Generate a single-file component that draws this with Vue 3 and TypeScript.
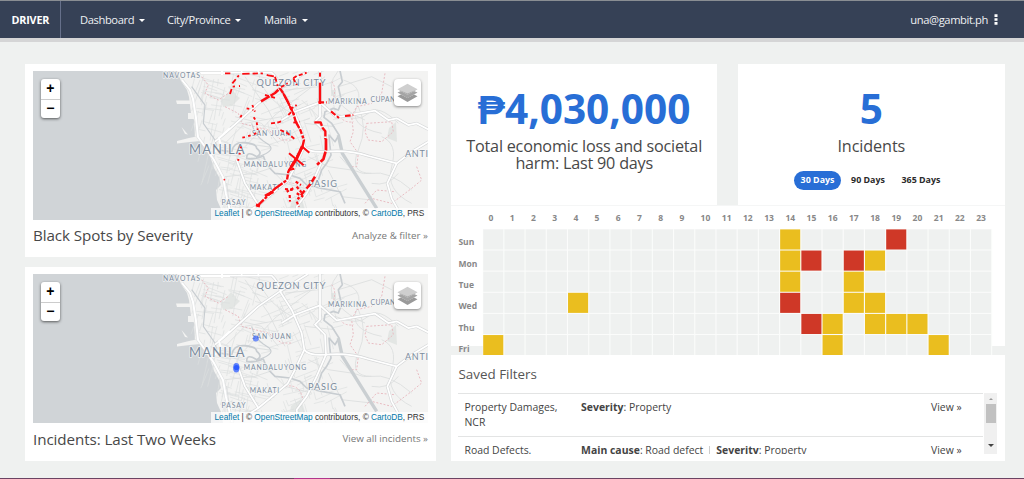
<script setup lang="ts">
interface Place { name: string; x: number; y: number; size: number; width?: number }
interface Filter { name: string; rules: { key: string; value: string }[] }

const menus = [
  { label: 'Dashboard', cls: 'm-dash' },
  { label: 'City/Province', cls: 'm-city' },
  { label: 'Manila', cls: 'm-manila' },
]

const maps = [
  { title: 'Black Spots by Severity', link: 'Analyze & filter »', kind: 'spots' },
  { title: 'Incidents: Last Two Weeks', link: 'View all incidents »', kind: 'points' },
]

const places: Place[] = [
  { name: 'NAVOTAS', x: 163, y: 77.6, size: 6.8, width: 37 },
  { name: 'QUEZON CITY', x: 256.5, y: 85.6, size: 9.2, width: 69 },
  { name: 'MARIKINA', x: 328, y: 103.8, size: 6.8, width: 38.5 },
  { name: 'CUPANG', x: 370.5, y: 102.4, size: 6.8, width: 30 },
  { name: 'SAN JUAN', x: 252, y: 136, size: 6.8, width: 39 },
  { name: 'MANILA', x: 189, y: 154.2, size: 13, width: 55.5 },
  { name: 'MANDALUYONG', x: 243.7, y: 167, size: 6.8, width: 62.5 },
  { name: 'ANTI', x: 405, y: 157.2, size: 9, width: 23 },
  { name: 'PASIG', x: 308, y: 187, size: 9.2, width: 29 },
  { name: 'MAKATI', x: 249.7, y: 190, size: 6.8, width: 29.5 },
  { name: 'PASAY', x: 221.6, y: 205, size: 6.8, width: 24 },
]

/* Street mesh: dense in the old city, sparser toward the hills. */
function mesh(): string {
  let seed = 11
  const rnd = () => (seed = (seed * 16807) % 2147483647) / 2147483647
  let d = ''
  for (let i = 0; i < 260; i++) {
    const y = 71 + rnd() * 149
    const coast = 196 + Math.max(0, y - 135) * 0.42
    const x = coast + Math.pow(rnd(), 1.5) * (335 - coast)
    const tilt = (x < 260 ? 0.25 : -0.35) + (rnd() - 0.5) * 0.3
    const a = rnd() > 0.5 ? tilt : tilt + Math.PI / 2
    const l = 6 + rnd() * 20
    d += `M${x.toFixed(1)} ${y.toFixed(1)}l${(Math.cos(a) * l).toFixed(1)} ${(Math.sin(a) * l).toFixed(1)}`
  }
  return d
}
const streets = mesh()

const lanes = [
  'M340 42Q300 90 335 130T420 190', 'M355 70Q420 90 395 150T470 230', 'M300 60L150 175L60 270', 'M60 60L130 160L180 260',
  'M100 45Q110 120 200 170', 'M170 180L60 200L0 260', 'M330 170Q400 200 430 170T520 200', 'M345 300Q390 360 440 350T560 400',
  'M400 150Q430 210 400 280T440 350', 'M310 340L350 420L440 430', 'M240 200L330 210', 'M230 130L290 190', 'M180 100L280 90',
  'M470 240Q520 260 500 330T560 440', 'M340 90L440 60L500 90', 'M440 380Q490 390 520 350', 'M250 300L310 330L380 340',
  'M120 320L180 380L260 400', 'M0 360L90 350L150 330', 'M30 180L110 200L160 260',
]

const majors = [
  'M0 230L100 140L165 95L250 42', 'M-90 48H140Q160 65 168 100L200 150L230 220L238 270L210 330L188 372L100 445L60 470',
  'M285 42V180L270 195L300 225L303 285L275 350L245 410L215 450L218 480', 'M170 190L210 165L285 137L335 182L450 162L490 190L515 185L550 205L575 200L610 218',
  'M238 270Q250 288 300 285Q370 278 430 298L515 320L560 285L610 255', 'M515 320L487 380L500 425L525 470', 'M35 310L60 380L100 445',
  'M0 230L-30 255', 'M100 42V50M50 42V50', 'M0 380L15 470',
]

const bounds = [
  'M480 50L470 110L440 140L395 150L380 180L385 225L375 255L400 290L395 330L375 330', 'M425 200L500 195L505 225L470 255L430 250L420 225L425 200',
  'M575 330L590 370L560 395L500 440L440 425', 'M320 75Q335 90 325 125', 'M0 150L40 170L50 200L130 220L170 250L200 250', 'M180 380Q230 370 235 430',
  'M420 440L455 400L510 405', 'M345 180Q360 200 385 195', 'M-70 60L-50 85L-60 110L-20 130L10 110',
]

const redLines = [
  { d: 'M15 102L22 80L45 78M22 70L45 42L110 40L130 46L150 50M0 40H20M150 50L158 78', w: 5.5, a: '16 8 7 12 22 9' },
  { d: 'M108 124L150 99L165 85', w: 7.5, a: '30 3' },
  { d: 'M120 105L155 115M168 82L188 70M205 55L215 48L245 38M205 55L215 75', w: 5.5, a: '12 7' },
  { d: 'M165 85L173 97M176 102L190 128L205 160L212 185L226 210L237 240L232 262L215 292L190 335L186 360L150 386L97 438', w: 7, a: '38 4 15 5 9 4' },
  { d: 'M172 95L190 130L208 165', w: 5, a: '' },
  { d: 'M232 258L216 294L198 322', w: 9, a: '' },
  { d: 'M192 280L236 316M232 260L253 278M190 330L208 326', w: 6, a: '' },
  { d: 'M285 38V50', w: 6, a: '' }, { d: 'M285 68V132', w: 7, a: '' },
  { d: 'M280 127H305M318 154L342 174M360 168L385 165', w: 6.5, a: '17 6' },
  { d: 'M268 187H287L293 204L301 214V238', w: 7, a: '30 5' },
  { d: 'M303 236V270L295 298L276 314', w: 8, a: '35 4' },
  { d: 'M270 350L255 374L240 390L218 418', w: 7.5, a: '18 8' },
  { d: 'M82 135L90 155M65 145L85 150M50 165L42 180M86 172L95 185L98 210M52 233L65 230L88 222L104 215', w: 5.5, a: '8 10' },
  { d: 'M138 190L160 187L174 182M166 210L185 218L210 238M195 148L215 135M205 188L225 185M190 165L200 155', w: 5.5, a: '12 7' },
  { d: 'M48 260L42 290L38 308', w: 6, a: '5 14' },
  { d: 'M180 387L203 390M194 405L195 425M212 365L228 375M215 380L230 398M215 400L235 410M215 425L222 440M205 385L185 395', w: 6.5, a: '9 6' },
  { d: 'M120 408L145 395M93 435L105 438', w: 9, a: '' },
]

const heat: Record<string, string> = {
  '0-14': 'y', '0-19': 'r', '1-14': 'y', '1-15': 'r', '1-17': 'r', '1-18': 'y', '2-14': 'y', '2-17': 'y',
  '3-4': 'y', '3-14': 'r', '3-17': 'y', '3-18': 'y', '4-15': 'r', '4-16': 'y', '4-18': 'y', '4-19': 'y', '4-20': 'y',
  '5-0': 'y', '5-16': 'y', '5-21': 'y',
}
const days = ['Sun', 'Mon', 'Tue', 'Wed', 'Thu', 'Fri']
const hours = Array.from({ length: 24 }, (_, i) => i)
const cells = days.flatMap((_, r) => hours.map((c) => ({ r, c, cls: heat[`${r}-${c}`] ?? 'n' })))

const filters: Filter[] = [
  { name: 'Property Damages, NCR', rules: [{ key: 'Severity', value: 'Property' }] },
  { name: 'Road Defects.', rules: [{ key: 'Main cause', value: 'Road defect' }, { key: 'Severity', value: 'Property' }] },
]
</script>

<template>
  <div class="page">
    <nav class="bar">
      <div class="brand">DRIVER</div>
      <div v-for="m in menus" :key="m.label" class="menu" :class="m.cls">{{ m.label }}<i class="caret" /></div>
      <div class="user">una@gambit.ph
        <svg class="dots" width="4" height="11" viewBox="0 0 4 11"><path d="M.5 .3h3v2.6h-3zM.5 4.2h3v2.6h-3zM.5 8.1h3v2.6h-3z" fill="#fff" /></svg>
      </div>
    </nav>

    <main class="board">
      <div class="left">
        <section v-for="m in maps" :key="m.kind" class="panel mapcard">
          <div class="map">
            <svg class="canvas" viewBox="33 71 395 149" preserveAspectRatio="none">
              <rect x="33" y="71" width="395" height="149" fill="#d0d4d7" />
              <g fill="#f3f3f2">
                <path d="M177 71L181 81L187 90L189 97L191 113L194 120L195 136L204 146L210 156L214 168L219 177L221 185L216 190L217 200L221 209L223 220H428V71Z" />
                <path d="M176 100.5H191V104H177ZM177 141L189 138L199 136L201 141L190 142L177 143.5ZM181.5 127L188 134.5L185 134ZM188 113h6v6h-6z" />
              </g>
              <g fill="#e3e6e4"><path d="M221 101L231 92L240 98L232 106L223 107Z" /><path d="M389 128L396 122L397 142L387 138Z" /><path d="M291 203L301 196L305 209H290Z" /><path d="M225 96l6-7 5 5-5 9z" /><path d="M331 90h5v6h-5z" /></g>
              <path :d="streets" class="street" />
              <g transform="translate(225 56.7) scale(.33333)" fill="none">
                <path v-for="d in lanes" :key="d" :d="d" class="lane" />
                <path v-for="d in bounds" :key="d" :d="d" class="bound" />
                <path class="river" d="M345 42L352 75L340 90L350 135L340 160L325 155L300 165L297 182L320 200L342 235L330 255L312 235L315 270L318 295L305 320L290 340L280 370" />
                <path class="river" d="M-20 280L20 285Q25 255 60 258T95 275Q115 290 95 300Q65 280 65 305Q90 310 115 298L125 325L150 350L195 355L225 365L245 385L290 395L345 405L360 440" />
                <path class="river thin" d="M80 200Q90 240 125 260T100 300M-100 90L-60 145L-65 200L-30 250L-25 270" />
                <path class="floodway" d="M340 235L352 290L455 455" />
                <path v-for="d in majors" :key="d" :d="d" class="case" />
                <path v-for="d in majors" :key="d" :d="d" class="major" />
              </g>
              <g fill="none">
                <path class="coast-case" d="M182 80L190 90L193 99L196 118L198 137L206 148L214 160L223 177L226 194L232 219" />
                <path class="coast" d="M182 80L190 90L193 99L196 118L198 137L206 148L214 160L223 177L226 194L232 219" />
                <path class="coast" d="M230 128L219 138L221 146L210 156M222 71V75M201 73H230" />
              </g>
              <text v-for="p in places" :key="p.name" class="place" :x="p.x" :y="p.y" :font-size="p.size" :textLength="p.width">{{ p.name }}</text>
              <g v-if="m.kind === 'spots'" transform="translate(225 60) scale(.33333)" fill="none" stroke="#fb0d12" stroke-linejoin="round">
                <path v-for="l in redLines" :key="l.d" :d="l.d" :stroke-width="l.w" :stroke-dasharray="l.a || undefined" />
                <circle cx="-2" cy="359" r="2" fill="#fb0d12" />
              </g>
              <g v-else fill="#2e5cff">
                <circle cx="255.8" cy="135.6" r="3" opacity=".65" />
                <ellipse cx="236.3" cy="164.8" rx="3.2" ry="4.7" opacity=".75" />
                <circle cx="236.5" cy="164.5" r="2.6" />
              </g>
            </svg>
            <div class="zoom"><button>+</button><button>−</button></div>
            <div class="layers">
              <svg width="21" height="20" viewBox="0 0 21 20">
                <path d="M.5 13.2L4 11.5L10.5 15L17 11.5L20.5 13.2L10.5 19Z" fill="#9a9a9a" />
                <path d="M.5 9.5L4 8L10.5 11.6L17 8L20.5 9.5L10.5 15.2Z" fill="#a5a5a5" />
                <path d="M.5 6.2L10.5 .8L20.5 6.2L10.5 11.8Z" fill="#cfcfcf" /><path d="M.5 6.2L10.5 11.8L20.5 6.2L10.5 10.6Z" fill="#aaa" />
              </svg>
            </div>
            <div class="credit"><b>Leaflet</b> | © <b>OpenStreetMap</b> contributors, © <b>CartoDB</b>, PRS</div>
          </div>
          <footer class="mapfoot"><h2>{{ m.title }}</h2><a>{{ m.link }}</a></footer>
        </section>
      </div>

      <div class="right">
        <div class="stats">
          <section class="panel stat">
            <div class="num">₱4,030,000</div>
            <p class="loss">Total economic loss and societal<br />harm: Last 90 days</p>
          </section>
          <section class="panel stat">
            <div class="num">5</div>
            <p>Incidents</p>
            <div class="range"><span class="on">30 Days</span><span>90 Days</span><span>365 Days</span></div>
          </section>
        </div>
        <section class="panel heat">
          <svg width="553" height="151" viewBox="451 205 553 151">
            <text v-for="h in hours" :key="h" class="tick" :x="488.6 + h * 21.2" y="221">{{ h }}</text>
            <text v-for="(d, i) in days" :key="d" class="tick" x="458.4" :y="245.4 + i * 21.35">{{ d }}</text>
            <rect x="482.8" y="229" width="509.4" height="127" fill="#fbfcfb" />
            <rect v-for="k in cells" :key="k.r + '-' + k.c" :class="k.cls" :x="483.2 + k.c * 21.21" :y="229.4 + k.r * 21.13" width="20.1" height="20.1" />
          </svg>
        </section>
        <section class="panel saved">
          <h3>Saved Filters</h3>
          <div class="scroller">
            <div class="rows">
              <div v-for="f in filters" :key="f.name" class="row">
                <div class="name">{{ f.name }}</div>
                <div class="rules"><template v-for="(r, i) in f.rules" :key="r.key"><i v-if="i" class="sep" /><b>{{ r.key }}</b>: {{ r.value }}</template></div>
                <div class="view">View »</div>
              </div>
            </div>
            <div class="track"><i class="up" /><i class="thumb" /><i class="down" /></div>
          </div>
        </section>
      </div>
    </main>
    <div class="strip"><i /></div>
  </div>
</template>

<style>
body { margin: 0; overflow: hidden; }
</style>

<style scoped>
.page { width: 1024px; height: 479px; box-sizing: border-box; display: flex; flex-direction: column; background: #eff1f0; font-family: "Open Sans", sans-serif; color: #444; overflow: hidden; }
.bar { flex: none; height: 42px; box-sizing: border-box; display: flex; background: #364156; border-top: 1px solid #8a8e93; border-bottom: 4px solid #d5d5d6; color: #eef0f3; font-size: 11.2px; letter-spacing: -.4px; line-height: 37px; white-space: nowrap; }
.brand { width: 60.6px; box-sizing: border-box; padding-left: 11.5px; font-weight: 700; font-size: 10.8px; letter-spacing: -.2px; border-right: 1px solid #66708a; color: #fff; }
.menu { display: flex; align-items: center; }
.m-dash { margin-left: 19.4px; width: 87px; }
.m-city { width: 97px; }
.caret { margin: 2px 0 0 5px; border: 3px solid transparent; border-top-color: #fff; border-bottom: 0; }
.user { margin-left: auto; margin-right: 26px; display: flex; align-items: center; }
.dots { margin-left: 6px; }
.board { flex: 1; display: flex; gap: 15px; padding: 22px 19.5px 0 25.4px; min-height: 0; }
.left { width: 410.6px; display: flex; flex-direction: column; gap: 10px; }
.panel { background: #fff; box-sizing: border-box; }
.mapcard { height: 193px; padding: 7px 8px 0 7.6px; }
.mapcard + .mapcard { height: 194px; }
.map { position: relative; height: 148.7px; overflow: hidden; }
.mapcard + .mapcard .map { height: 149.4px; }
.canvas { display: block; width: 395px; height: 149px; }
.street { stroke: #dcdedf; stroke-width: .65; fill: none; }
.lane { stroke: #dcdedf; stroke-width: 2.6; }
.bound { stroke: #e8bcc2; stroke-width: 3; stroke-dasharray: 6 5; }
.river { stroke: #c8cdd1; stroke-width: 5; stroke-linejoin: round; }
.river.thin { stroke-width: 3.5; }
.floodway { stroke: #cacfd2; stroke-width: 10; }
.case { stroke: #d5d7d8; stroke-width: 9; stroke-linejoin: round; }
.major { stroke: #fff; stroke-width: 5.2; stroke-linejoin: round; }
.coast-case { stroke: #dddfe0; stroke-width: 3; }
.coast { stroke: #fff; stroke-width: 2; }
.place { fill: #7c8c9d; font-family: Lato, "Open Sans", sans-serif; paint-order: stroke; stroke: rgba(246, 247, 247, .85); stroke-width: 1.6px; stroke-linejoin: round; }
.zoom { position: absolute; left: 7.6px; top: 8px; width: 19.6px; border-radius: 3px; background: #fff; box-shadow: 0 1px 3px rgba(0, 0, 0, .6); }
.zoom button { display: block; width: 100%; height: 19.5px; padding: 0; border: 0; background: none; font: 700 14px/19px "Liberation Sans", sans-serif; color: #000; }
.zoom button + button { border-top: 1px solid #ccc; line-height: 17px; }
.layers { position: absolute; right: 7px; top: 8px; width: 27px; height: 27px; display: flex; align-items: center; justify-content: center; border-radius: 4px; background: #fff; box-shadow: 0 1px 3px rgba(0, 0, 0, .45); }
.credit { position: absolute; right: 0; bottom: 0; box-sizing: border-box; width: 217px; height: 11.6px; padding-left: 3.5px; background: rgba(255, 255, 255, .75); font: 8.3px/11.6px "Liberation Sans", sans-serif; letter-spacing: -.02px; color: #333; white-space: nowrap; }
.credit b { font-weight: 400; color: #0078a8; }
.mapfoot { display: flex; justify-content: space-between; align-items: center; height: 32px; }
h2 { margin: 0; font-size: 15.2px; letter-spacing: -.08px; font-weight: 400; line-height: 32px; color: #484848; }
.mapcard:first-child h2 { line-height: 30px; padding-bottom: 2px; }
.mapfoot a { font-size: 9.8px; color: #777; line-height: 34px; }
.right { flex: 1; display: flex; flex-direction: column; min-width: 0; }
.stats { display: flex; justify-content: space-between; height: 141px; }
.stat { width: 266.4px; text-align: center; padding-top: 21px; }
.num { font-size: 40.6px; font-weight: 700; color: #286ed6; line-height: 48px; white-space: nowrap; }
.stat p { margin: 5px 0 0; font-size: 16.2px; letter-spacing: -.1px; line-height: 17.3px; white-space: nowrap; color: #484848; }
.stat .loss { letter-spacing: -.22px; }
.range { display: flex; margin: 16px 0 0 56px; font-size: 8.9px; font-weight: 700; color: #2b2b2b; line-height: 18.6px; }
.range span { border-radius: 10px; padding: 0 6.5px; margin-right: 3.6px; }
.range .on { background: #286ed6; color: #fff; }
.heat { height: 141.3px; border-top: 1px solid #f5f6f6; }
.heat svg { display: block; margin-top: -1px; overflow: visible; }
.tick { font-size: 8.5px; font-weight: 700; fill: #888; }
.n { fill: #eff1f0; }
.y { fill: #eabe1f; }
.r { fill: #cf3827; }
.saved { margin-top: 9.2px; height: 105.5px; padding: 10px 7.5px 0; }
h3 { margin: 0; font-size: 13.4px; font-weight: 400; line-height: 18px; height: 27.5px; color: #555; }
.scroller { display: flex; gap: 1px; height: 61px; overflow: hidden; }
.rows { flex: 1; font-size: 10.45px; line-height: 15px; }
.row { display: flex; box-sizing: border-box; height: 42.6px; padding-top: 6.5px; border-top: 1px solid #e3e4e4; }
.name { width: 104px; padding-left: 6px; margin-right: 12.6px; }
.rules { flex: 1; }
.sep { display: inline-block; width: 1px; height: 8px; margin: 0 6px; background: #ccc; }
.view { width: 52.4px; }
.track { width: 12.6px; background: #f0f0f0; display: flex; flex-direction: column; align-items: center; }
.up { margin-top: 5px; border: 2.6px solid transparent; border-bottom-color: #999; border-top: 0; }
.thumb { margin-top: 4.5px; width: 10px; height: 19px; background: #c1c1c1; }
.down { margin-top: 21px; border: 3px solid transparent; border-top-color: #444; border-bottom: 0; }
.strip { flex: none; height: 1px; background: #6b4463; }
.strip i { display: block; height: 1px; width: 36px; margin-left: 294px; background: #b0368c; }
</style>
